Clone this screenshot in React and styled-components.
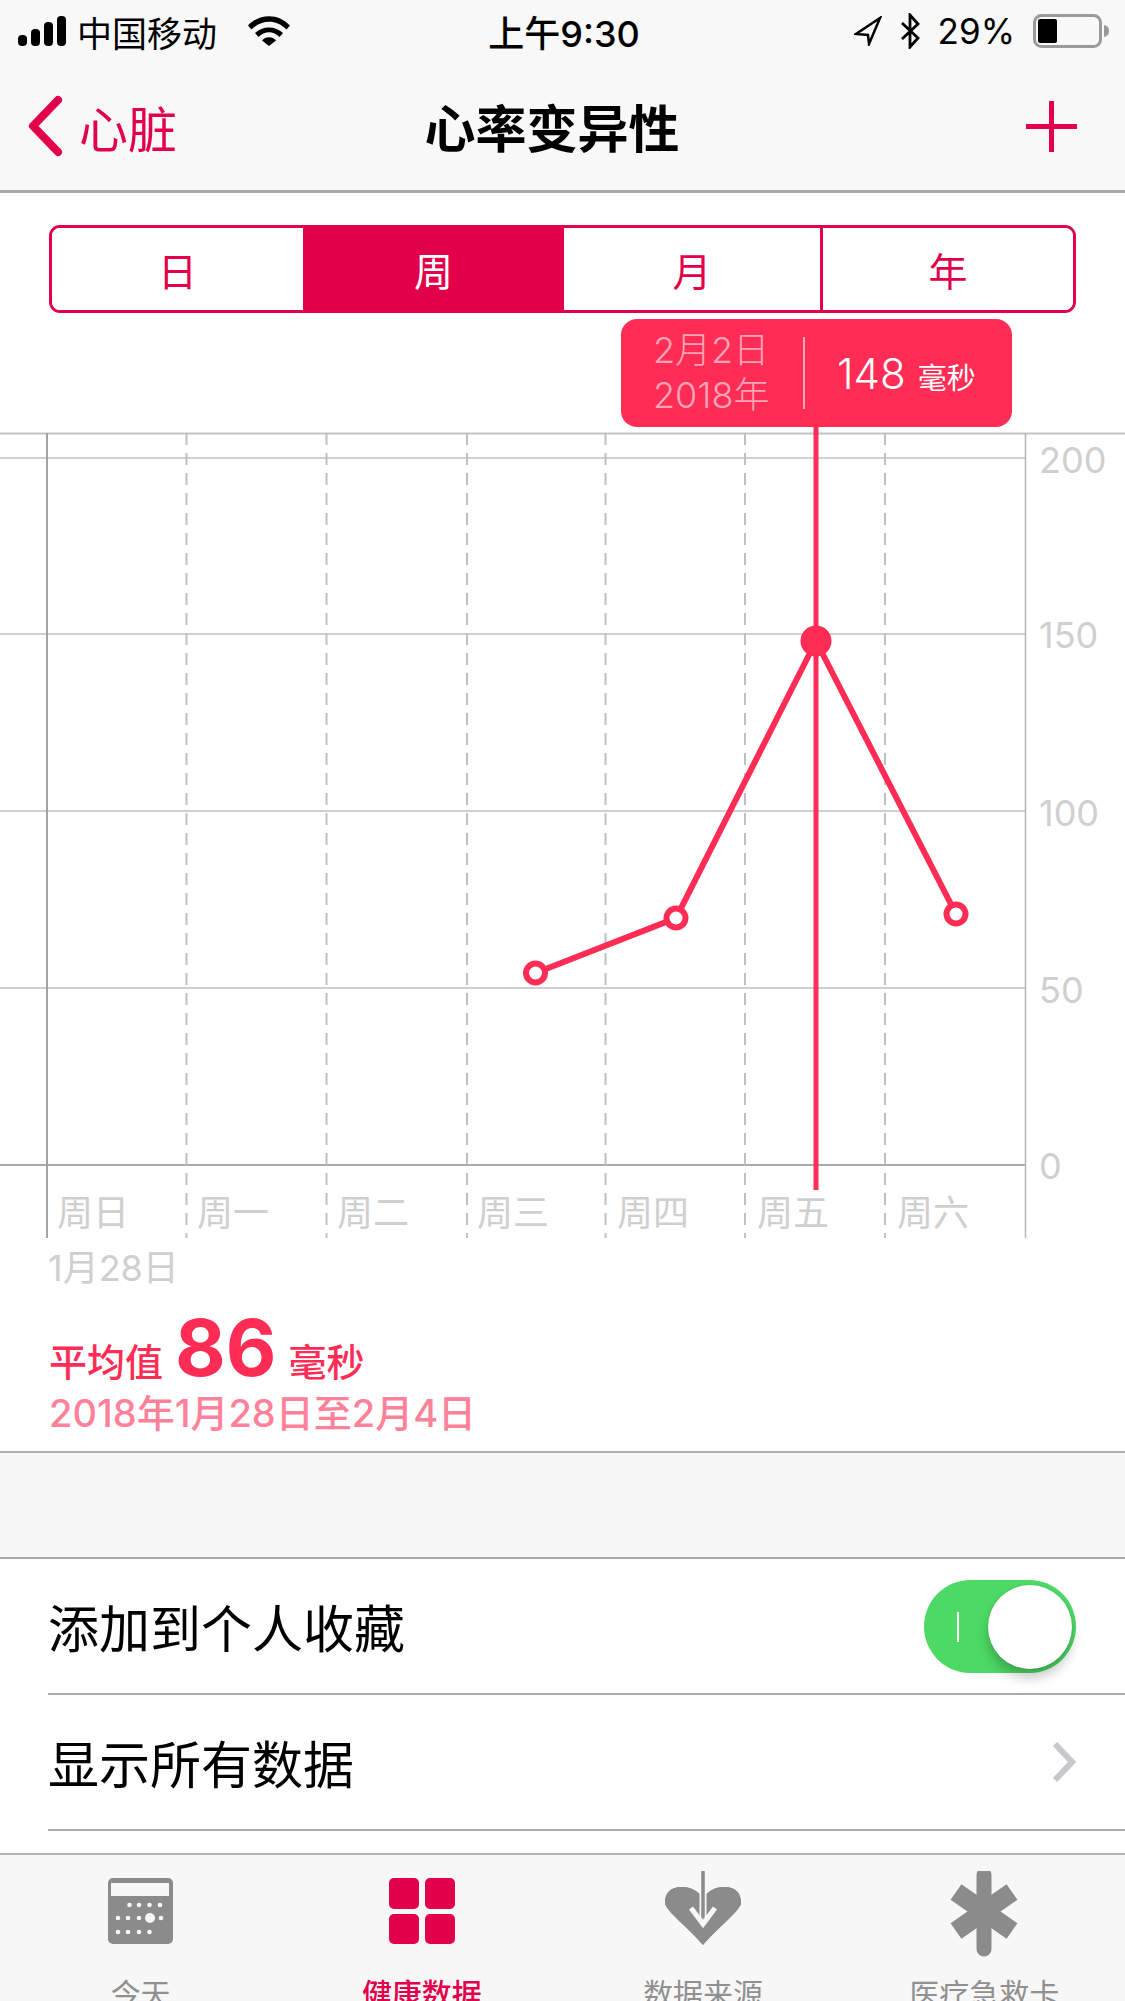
import styled, { createGlobalStyle } from "styled-components";

const RED = "#e2004a";
const PINK = "#ff2d55";
const GREY = "#8b8b8b";
const FONT = `Inter, "Noto Sans CJK SC", sans-serif`;

const GlobalStyle = createGlobalStyle`
  html, body { margin: 0; padding: 0; background: #fff; }
  body { font-family: ${FONT}; }
`;

const Page = styled.div`
  width: 1125px;
  height: 2001px;
  display: flex;
  flex-direction: column;
  overflow: hidden;
  background: #fff;
  color: #000;
`;

const Header = styled.header`
  height: 190px;
  background: #f8f8f8;
  border-bottom: 3px solid #a9a9a9;
  flex: none;
`;

const StatusBar = styled.div`
  height: 62px;
  padding: 0 15px 0 18px;
  display: grid;
  grid-template-columns: 1fr auto 1fr;
  align-items: center;
  font-size: 35px;
`;

const StatusGroup = styled.div`
  display: flex;
  align-items: center;
  justify-content: ${(p) => (p.$right ? "flex-end" : "flex-start")};
  gap: ${(p) => p.$gap}px;
`;

const Time = styled.div`
  font-size: 36px;
  font-weight: 500;
`;

const NavBar = styled.nav`
  height: 128px;
  padding: 0 48px 0 27px;
  display: grid;
  grid-template-columns: 1fr auto 1fr;
  align-items: center;
`;

const BackLink = styled.div`
  display: flex;
  align-items: center;
  gap: 16px;
  color: ${RED};
  font-size: 49px;
`;

const Title = styled.h1`
  margin: 0;
  font-size: 51px;
  font-weight: 700;
`;

const PlusWrap = styled.div`
  display: flex;
  justify-content: flex-end;
`;

const SegmentWrap = styled.div`
  padding: 32px 49px 0;
  flex: none;
`;

const Segments = styled.div`
  height: 88px;
  box-sizing: border-box;
  border: 3px solid ${RED};
  border-radius: 11px;
  display: grid;
  grid-template-columns: 251px 261px 256px 1fr;
  overflow: hidden;
`;

const Segment = styled.div`
  display: flex;
  align-items: center;
  justify-content: center;
  font-size: 39px;
  background: ${(p) => (p.$active ? RED : "#fff")};
  color: ${(p) => (p.$active ? "#fff" : RED)};
  border-left: ${(p) => (p.$divided ? `3px solid ${RED}` : "none")};
`;

const TooltipSlot = styled.div`
  position: relative;
  height: 120px;
  flex: none;
`;

const Tooltip = styled.div`
  position: absolute;
  left: 621px;
  top: 6px;
  width: 391px;
  height: 108px;
  box-sizing: border-box;
  padding-left: 32px;
  background: ${PINK};
  border-radius: 16px;
  display: flex;
  align-items: center;
  color: #fff;
`;

const TooltipDate = styled.div`
  width: 150px;
  font-size: 36px;
  line-height: 45px;
  color: #ffa3b6;
  font-weight: 300;
`;

const TooltipRule = styled.div`
  width: 2px;
  height: 72px;
  background: #ffa3b6;
  margin-right: 32px;
`;

const TooltipValue = styled.div`
  font-size: 42px;
  font-weight: 300;
  white-space: nowrap;
`;

const TooltipUnit = styled.span`
  font-size: 29px;
  font-weight: 400;
  margin-left: 12px;
`;

const ChartSvg = styled.svg`
  display: block;
  flex: none;
  overflow: visible;
  text {
    font-family: ${FONT};
    font-size: 36px;
    fill: #cfcfcf;
  }
`;

const RangeStart = styled.div`
  padding-left: 48px;
  height: 60px;
  line-height: 60px;
  font-size: 36px;
  color: #cfcfcf;
  flex: none;
`;

const Summary = styled.section`
  height: 155px;
  box-sizing: border-box;
  padding: 8px 49px 0;
  border-bottom: 2px solid #b0b0b0;
  flex: none;
`;

const AverageRow = styled.div`
  height: 84px;
  display: flex;
  align-items: baseline;
  gap: 12px;
  color: ${PINK};
  font-size: 38px;
  font-weight: 500;
`;

const AverageNumber = styled.span`
  font-size: 78px;
  line-height: 84px;
  font-weight: 700;
`;

const DateRange = styled.div`
  font-size: 38px;
  line-height: 46px;
  font-weight: 500;
  color: #ff8199;
  white-space: nowrap;
`;

const Band = styled.div`
  height: 104px;
  background: #f7f7f7;
  border-bottom: 2px solid #a9a9a9;
  flex: none;
`;

const Rows = styled.div`
  padding-left: 48px;
  flex: 1;
`;

const Row = styled.div`
  height: 134px;
  box-sizing: content-box;
  padding-right: 49px;
  display: flex;
  align-items: center;
  justify-content: space-between;
  font-size: 51px;
  border-bottom: 2px solid #ababab;
`;

const Switch = styled.div`
  position: relative;
  width: 152px;
  height: 93px;
  border-radius: 47px;
  background: #4cd964;
`;

const SwitchMark = styled.div`
  position: absolute;
  left: 33px;
  top: 32px;
  width: 2px;
  height: 30px;
  background: #fff;
`;

const SwitchKnob = styled.div`
  position: absolute;
  right: 4px;
  top: 5px;
  width: 84px;
  height: 84px;
  border-radius: 50%;
  background: #fff;
  box-shadow: 0 9px 12px rgba(0, 0, 0, 0.22), 0 0 2px rgba(0, 0, 0, 0.15);
`;

const TabBar = styled.footer`
  height: 146px;
  flex: none;
  box-sizing: content-box;
  background: #f7f7f7;
  border-top: 2px solid #b2b2b2;
  display: grid;
  grid-template-columns: repeat(4, 1fr);
`;

const Tab = styled.div`
  position: relative;
  display: flex;
  flex-direction: column;
  align-items: center;
  color: ${(p) => (p.$active ? RED : "#909090")};
  font-weight: ${(p) => (p.$active ? 500 : 400)};
`;

const TabIcon = styled.svg`
  display: block;
  margin-top: 16px;
  flex: none;
`;

const TabLabel = styled.span`
  font-size: 30px;
  line-height: 36px;
  margin-top: 15px;
`;

function SignalIcon() {
  return (
    <svg width="48" height="30" viewBox="0 0 48 30">
      <rect x="0" y="19" width="9" height="11" rx="4" fill="#000" />
      <rect x="13" y="13" width="9" height="17" rx="4" fill="#000" />
      <rect x="26" y="6" width="9" height="24" rx="4" fill="#000" />
      <rect x="39" y="0" width="9" height="30" rx="4" fill="#000" />
    </svg>
  );
}

function WifiIcon() {
  return (
    <svg width="42" height="30" viewBox="0 0 42 30">
      <path d="M0 9.5C11.5-3 30.5-3 42 9.5l-3.5 4C28.5 3 13.5 3 3.500 13.500z" fill="#000" />
      <path d="M7 17C14 9.500 28 9.500 35 17l-3.500 4C25.500 14.500 16.500 14.500 10.500 21z" fill="#000" />
      <path d="M14 24.500C17 20 25 20 28 24.500L21 30z" fill="#000" />
    </svg>
  );
}

function LocationIcon() {
  return (
    <svg width="28" height="30" viewBox="0 0 28 30">
      <path d="M26 2 2 18l12 1 1 9z" fill="none" stroke="#000" strokeWidth="2.500" strokeLinejoin="miter" />
    </svg>
  );
}

function BluetoothIcon() {
  return (
    <svg width="20" height="36" viewBox="0 0 20 36">
      <path d="M2 10l16 15-8 9V2l8 9L2 26" fill="none" stroke="#000" strokeWidth="2.800" />
    </svg>
  );
}

function BatteryIcon() {
  return (
    <svg width="77" height="34" viewBox="0 0 77 34">
      <rect x="1.500" y="1.500" width="66" height="31" rx="7" fill="none" stroke="#9a9a9a" strokeWidth="3" />
      <rect x="5" y="5" width="19" height="24" rx="2" fill="#000" />
      <path d="M71 11c4 1 5 3 5 6s-1 5-5 6z" fill="#9a9a9a" />
    </svg>
  );
}

function BackChevron() {
  return (
    <svg width="36" height="62" viewBox="0 0 36 62">
      <path d="M31 5 6 31l25 26" fill="none" stroke={RED} strokeWidth="8" strokeLinecap="round" strokeLinejoin="round" />
    </svg>
  );
}

function PlusIcon() {
  return (
    <svg width="51" height="51" viewBox="0 0 51 51">
      <path d="M25.500 0v51M0 25.500h51" stroke={RED} strokeWidth="5" />
    </svg>
  );
}

function DisclosureChevron() {
  return (
    <svg width="24" height="40" viewBox="0 0 24 40">
      <path d="M3 2 20 20 3 38" fill="none" stroke="#c7c7cc" strokeWidth="6" />
    </svg>
  );
}

function TodayIcon() {
  const dots = [
    [130.5, 1905], [140, 1905], [150.5, 1905], [161, 1905],
    [119, 1918], [129, 1918], [140, 1918], [162, 1918],
    [119, 1932], [129, 1932], [140, 1932], [150.5, 1932],
  ];
  return (
    <TabIcon width="66" height="90" viewBox="109 1871 66 90">
      <rect x="109" y="1878" width="65" height="66" rx="5" fill={GREY} />
      <rect x="112" y="1883" width="58" height="13" fill="#f7f7f7" />
      {dots.map(([x, y]) => (
        <circle key={`${x}-${y}`} cx={x} cy={y} r="2.300" fill="#f7f7f7" />
      ))}
      <circle cx="151" cy="1918" r="5" fill="#f7f7f7" />
    </TabIcon>
  );
}

function HealthIcon() {
  return (
    <TabIcon width="66" height="90" viewBox="0 -7 66 90">
      <rect x="0" y="0" width="30" height="31" rx="5" fill={RED} />
      <rect x="36" y="0" width="30" height="31" rx="5" fill={RED} />
      <rect x="0" y="36" width="30" height="30" rx="5" fill={RED} />
      <rect x="36" y="36" width="30" height="30" rx="5" fill={RED} />
    </TabIcon>
  );
}

function SourcesIcon() {
  return (
    <TabIcon width="76" height="90" viewBox="0 0 76 90">
      <path d="M38 74C24 58 0 36 0 32 0 23 4 16 17 16c11 0 18 6 21 12 3-6 10-12 21-12 13 0 17 7 17 16 0 4-24 26-38 42z" fill={GREY} />
      <path d="M38 74C26 59 0 40 0 32 0 23 4 16 17 16c11 0 18 6 21 12 3-6 10-12 21-12 13 0 17 7 17 16 0 8-26 27-38 42z" fill={GREY} />
      <path d="M38 18v30" stroke="#f7f7f7" strokeWidth="7" />
      <path d="M26 37 38 53 50 37" fill="none" stroke="#f7f7f7" strokeWidth="5" />
      <path d="M38 0v46" stroke={GREY} strokeWidth="3.500" strokeLinecap="round" />
    </TabIcon>
  );
}

function EmergencyIcon() {
  return (
    <TabIcon width="72" height="90" viewBox="0 -2 72 90">
      <path d="M36 2v74" stroke={GREY} strokeWidth="15" strokeLinecap="round" />
      <path d="M8 19 64 58M64 19 8 58" stroke={GREY} strokeWidth="19" />
    </TabIcon>
  );
}

const gridLines = [
  { y: 25, color: "#cfcfcf" },
  { y: 201, color: "#cfcfcf" },
  { y: 378, color: "#cfcfcf" },
  { y: 555, color: "#cfcfcf" },
  { y: 732, color: "#ababab" },
];
const dashedX = [186.5, 326.5, 467, 605.5, 745, 885];
const days = ["周日", "周一", "周二", "周三", "周四", "周五", "周六"];
const yLabels = [
  { text: "200", y: 40 },
  { text: "150", y: 215 },
  { text: "100", y: 393 },
  { text: "50", y: 570 },
  { text: "0", y: 746 },
];
const points = [
  { x: 535.500, y: 540 },
  { x: 676, y: 485 },
  { x: 816, y: 208, selected: true },
  { x: 956, y: 481 },
];

function Chart() {
  const line = points.map((p) => `${p.x},${p.y}`).join(" ");
  return (
    <ChartSvg width="1125" height="805" viewBox="0 0 1125 805">
      <path d="M0 .5H1125" stroke="#c4c4c4" strokeWidth="2" />
      {gridLines.map((g) => (
        <path key={g.y} d={`M0 ${g.y}H1025`} stroke={g.color} strokeWidth="2" />
      ))}
      <path d="M47 0V805" stroke="#a3a3a3" strokeWidth="2" />
      <path d="M1025.500 0V805" stroke="#b5b5b5" strokeWidth="1.500" />
      {dashedX.map((x) => (
        <path key={x} d={`M${x} 0V805`} stroke="#c0c0c0" strokeWidth="2" strokeDasharray="12 8" />
      ))}
      {days.map((d, i) => (
        <text key={d} x={57 + i * 140} y="793">{d}</text>
      ))}
      {yLabels.map((l) => (
        <text key={l.text} x="1039" y={l.y}>{l.text}</text>
      ))}
      <path d="M816-8V757" stroke={PINK} strokeWidth="5" />
      <polyline points={line} fill="none" stroke={PINK} strokeWidth="6" />
      {points.map((p) =>
        p.selected ? (
          <circle key={p.x} cx={p.x} cy={p.y} r="15.500" fill={PINK} />
        ) : (
          <circle key={p.x} cx={p.x} cy={p.y} r="9.500" fill="#fff" stroke={PINK} strokeWidth="6" />
        )
      )}
    </ChartSvg>
  );
}

const ranges = ["日", "周", "月", "年"];
const tabs = [
  { label: "今天", icon: <TodayIcon /> },
  { label: "健康数据", icon: <HealthIcon />, active: true },
  { label: "数据来源", icon: <SourcesIcon /> },
  { label: "医疗急救卡", icon: <EmergencyIcon /> },
];

export default function App() {
  return (
    <Page>
      <GlobalStyle />
      <Header>
        <StatusBar>
          <StatusGroup $gap={11}>
            <SignalIcon />
            <span>中国移动</span>
            <span style={{ width: 9 }} />
            <WifiIcon />
          </StatusGroup>
          <Time>上午9:30</Time>
          <StatusGroup $right $gap={18}>
            <LocationIcon />
            <BluetoothIcon />
            <span>29%</span>
            <BatteryIcon />
          </StatusGroup>
        </StatusBar>
        <NavBar>
          <BackLink>
            <BackChevron />
            <span>心脏</span>
          </BackLink>
          <Title>心率变异性</Title>
          <PlusWrap>
            <PlusIcon />
          </PlusWrap>
        </NavBar>
      </Header>
      <SegmentWrap>
        <Segments>
          {ranges.map((r, i) => (
            <Segment key={r} $active={r === "周"} $divided={i === 3}>
              {r}
            </Segment>
          ))}
        </Segments>
      </SegmentWrap>
      <TooltipSlot>
        <Tooltip>
          <TooltipDate>
            2月2日
            <br />
            2018年
          </TooltipDate>
          <TooltipRule />
          <TooltipValue>
            148<TooltipUnit>毫秒</TooltipUnit>
          </TooltipValue>
        </Tooltip>
      </TooltipSlot>
      <Chart />
      <RangeStart>1月28日</RangeStart>
      <Summary>
        <AverageRow>
          平均值 <AverageNumber>86</AverageNumber> 毫秒
        </AverageRow>
        <DateRange>2018年1月28日至2月4日</DateRange>
      </Summary>
      <Band />
      <Rows>
        <Row>
          <span>添加到个人收藏</span>
          <Switch>
            <SwitchMark />
            <SwitchKnob />
          </Switch>
        </Row>
        <Row>
          <span>显示所有数据</span>
          <DisclosureChevron />
        </Row>
      </Rows>
      <TabBar>
        {tabs.map((t) => (
          <Tab key={t.label} $active={t.active}>
            {t.icon}
            <TabLabel>{t.label}</TabLabel>
          </Tab>
        ))}
      </TabBar>
    </Page>
  );
}
